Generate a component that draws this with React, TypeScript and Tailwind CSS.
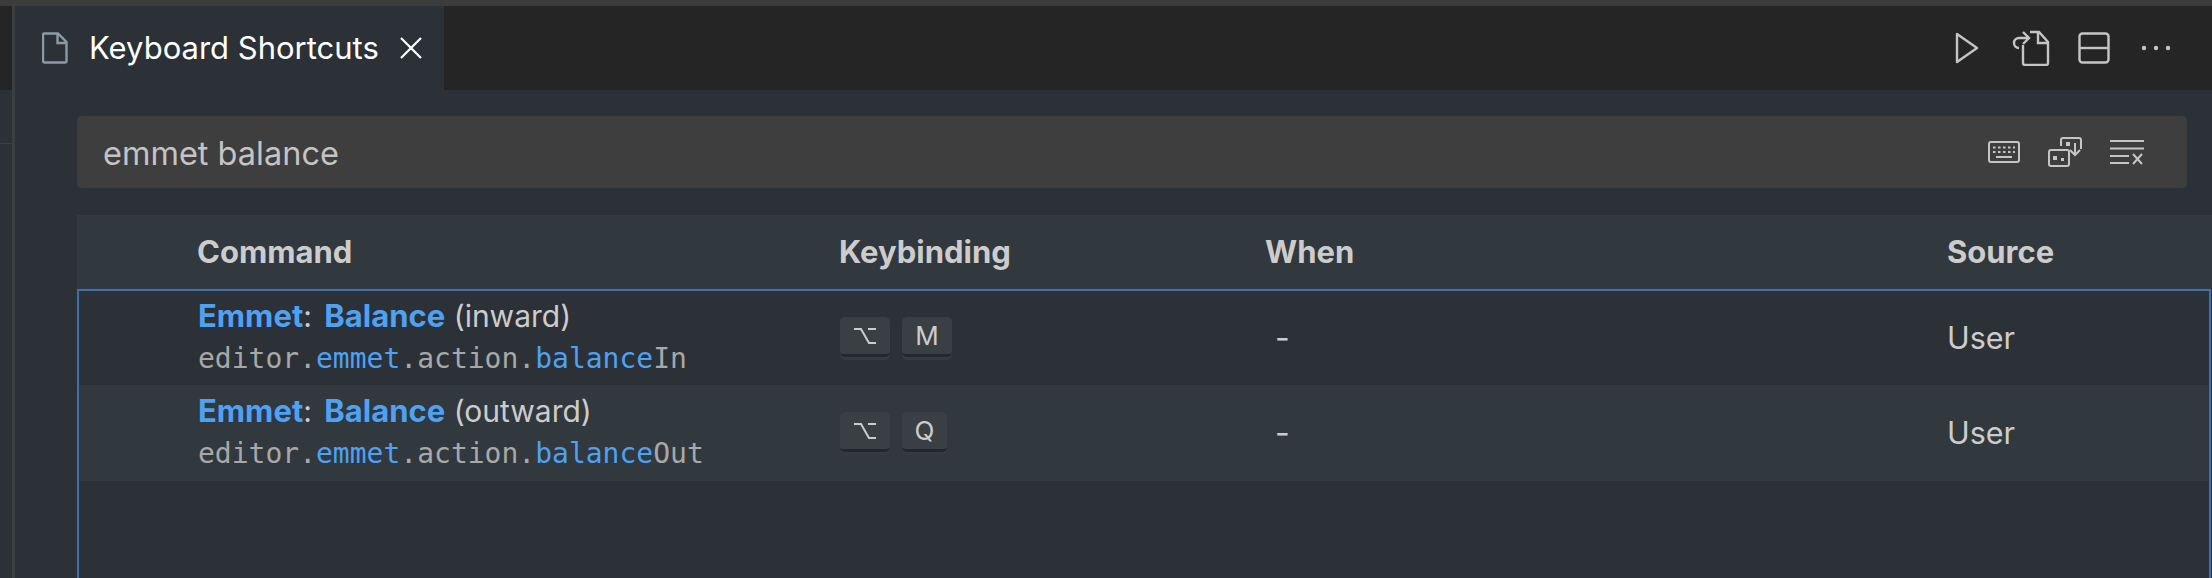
const Hl = ({ children }: { children: string }) => <span className="text-[#4ea1f3]">{children}</span>;

function Key({ label, w }: { label: string; w: string }) {
  return (
    <span className={`flex h-[40px] ${w} items-center justify-center rounded-[5px] bg-[#3a3f44] border-b-[3px] border-[#23282c] shadow-[0_3px_0_#363b40] text-[26px] text-[#cccccc]`}>
      {label}
    </span>
  );
}

function OptionKey() {
  return (
    <svg width="22" height="18" viewBox="0 0 22 18" fill="none" stroke="#cccccc" strokeWidth="2">
      <path d="M0 2h7l8 14h7M14 2h8" />
    </svg>
  );
}

type Row = { suffix: string; cmd: string; key: string; keyW: string; bg: string; h: string };

const rows: Row[] = [
  { suffix: '(inward)', cmd: 'In', key: 'M', keyW: 'w-[50px]', bg: 'bg-[#2b3136]', h: 'h-[94px]' },
  { suffix: '(outward)', cmd: 'Out', key: 'Q', keyW: 'w-[45px]', bg: 'bg-[#31383e]', h: 'h-[96px]' },
];

function TableRow({ r }: { r: Row }) {
  return (
    <div className={`flex ${r.h} ${r.bg} items-center`}>
      <div className="w-[119px] shrink-0" />
      <div className="w-[642px] shrink-0 flex flex-col">
        <div className="text-[30px] leading-[40px] text-[#cccccc]">
          <b className="text-[31px] font-bold text-[#4ea1f3]">Emmet</b>: <b className="ml-[4px] text-[31px] font-bold text-[#4ea1f3]">Balance</b> {r.suffix}
        </div>
        <div className="font-['DejaVu_Sans_Mono',monospace] text-[28px] leading-[44px] text-[#a8a8a8] translate-y-[1px]">
          editor.<Hl>emmet</Hl>.action.<Hl>balance</Hl>{r.cmd}
        </div>
      </div>
      <div className="w-[426px] shrink-0 flex gap-[12px] -translate-y-[1px]">
        <span className="flex h-[40px] w-[50px] items-center justify-center rounded-[5px] bg-[#3a3f44] border-b-[3px] border-[#23282c] shadow-[0_3px_0_#363b40]">
          <OptionKey />
        </span>
        <Key label={r.key} w={r.keyW} />
      </div>
      <div className="w-[681px] shrink-0 pl-[9px] text-[32px] text-[#cccccc]">-</div>
      <div className="text-[30.500px] text-[#cccccc]">User</div>
    </div>
  );
}

export default function App() {
  return (
    <div className="w-[2212px] h-[578px] overflow-hidden flex flex-col bg-[#2b3136] font-['Inter',sans-serif]">
      <div className="h-[6px] shrink-0 bg-[#3c3c3c]" />
      <div className="flex flex-1 min-h-0">
        <div className="w-[12px] shrink-0 flex flex-col">
          <div className="h-[84px] bg-[#252526]" />
          <div className="h-[54px] border-b border-[#3a4046] bg-[#2b3136]" />
          <div className="flex-1 bg-[#2b3136]" />
        </div>
        <div className="w-[3px] shrink-0 bg-[#3c3f41]" />
        <div className="flex-1 min-w-0 flex flex-col">
          {/* tab bar */}
          <div className="h-[84px] shrink-0 flex bg-[#252526]">
            <div className="w-[429px] flex items-center bg-[#2b3136]">
              <svg className="ml-[27px]" width="26" height="32" viewBox="0 0 26 32" fill="none" stroke="#8d9aa5" strokeWidth="2.4">
                <path d="M2 1.500h14l8.500 8.500v19a1.500 1.500 0 0 1-1.500 1.500H2.500A1.500 1.500 0 0 1 1 29V3a1.500 1.500 0 0 1 1-1.500zM15.500 2v9h9" />
              </svg>
              <span className="ml-[21px] text-[31px] text-white">Keyboard Shortcuts</span>
              <svg className="ml-[21px]" width="22" height="22" viewBox="0 0 22 22" stroke="#ffffff" strokeWidth="2.2">
                <path d="M1 1l20 20M21 1L1 21" />
              </svg>
            </div>
            <div className="flex-1 flex items-center justify-end pr-[41px] text-[#cccccc]">
              <svg width="24" height="32" viewBox="0 0 24 32" fill="none" stroke="#c5c5c5" strokeWidth="2.4">
                <path d="M2 2v28l20-14z" strokeLinejoin="round" />
              </svg>
              <svg className="ml-[33px]" width="38" height="36" viewBox="0 0 38 36" fill="none" stroke="#c5c5c5" strokeWidth="2.4">
                <path d="M11 15v18a2 2 0 0 0 2 2h21a2 2 0 0 0 2-2V12L27 2h-9M26 2v11h10M2 13a5 5 0 0 1 5-5h10M11 2l6 6-6 6M7 18a5 5 0 0 1-5-5" />
              </svg>
              <svg className="ml-[28px]" width="32" height="32" viewBox="0 0 32 32" fill="none" stroke="#c5c5c5" strokeWidth="2.4">
                <rect x="1.500" y="1.500" width="29" height="29" rx="3" />
                <path d="M1.500 16h29" />
              </svg>
              <svg className="ml-[31px]" width="30" height="6" viewBox="0 0 30 6" fill="#c5c5c5">
                <circle cx="3" cy="3" r="2.200" />
                <circle cx="15" cy="3" r="2.200" />
                <circle cx="27" cy="3" r="2.200" />
              </svg>
            </div>
          </div>
          {/* search */}
          <div className="ml-[62px] mr-[25px] mt-[26px] h-[72px] shrink-0 flex items-center rounded-[5px] bg-[#3e3e3e] pl-[26px] pr-[43px]">
            <span className="flex-1 text-[32.500px] text-[#c4c4c4] translate-y-[2px]">emmet balance</span>
            <svg width="32" height="22" viewBox="0 0 32 22" fill="none" stroke="#c5c5c5" strokeWidth="2">
              <rect x="1" y="1" width="30" height="20" rx="2" />
              <path d="M5 6.500h22M5 11h22" strokeDasharray="2.500 2.500" />
              <path d="M8 16h16" />
            </svg>
            <svg className="ml-[28px]" width="34" height="30" viewBox="0 0 34 30" fill="none" stroke="#c5c5c5" strokeWidth="2">
              <rect x="1" y="13" width="20" height="16" rx="2" />
              <path d="M13 9V3a2 2 0 0 1 2-2h16a2 2 0 0 1 2 2v9M27 6v12M22 13l5 5 5-5" />
              <path d="M5 19h4v4H5zM13 21h3v3h-3zM18 5h4v4h-4z" fill="#c5c5c5" stroke="none" />
            </svg>
            <svg className="ml-[28px]" width="34" height="26" viewBox="0 0 34 26" fill="none" stroke="#c5c5c5" strokeWidth="2">
              <path d="M0 2h34M0 9.500h34M0 17h19M0 24h19M23 15l9 10M32 15l-9 10" />
            </svg>
          </div>
          {/* header */}
          <div className="ml-[62px] mt-[27px] h-[74px] shrink-0 flex items-center bg-[#31383e] text-[31px] font-bold text-[#cccccc]">
            <div className="w-[120px] shrink-0" />
            <div className="w-[642px] shrink-0">Command</div>
            <div className="w-[426px] shrink-0">Keybinding</div>
            <div className="w-[682px] shrink-0">When</div>
            <div>Source</div>
          </div>
          {/* list */}
          <div className="ml-[62px] mr-[1px] flex-1 min-h-0 border-[2px] border-b-0 border-[#3f6fae]">
            {rows.map((r) => (
              <TableRow key={r.cmd} r={r} />
            ))}
          </div>
        </div>
      </div>
    </div>
  );
}
